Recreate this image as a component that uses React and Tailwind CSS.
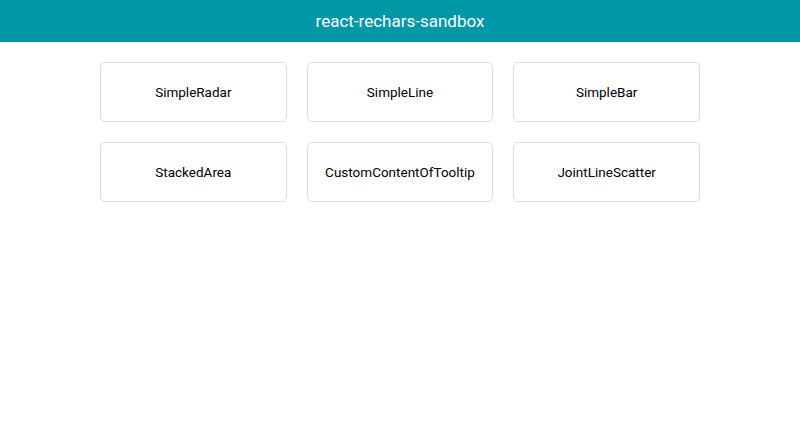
export default function App() {
  const items = [
    "SimpleRadar",
    "SimpleLine",
    "SimpleBar",
    "StackedArea",
    "CustomContentOfTooltip",
    "JointLineScatter",
  ];
  return (
    <div className="min-h-[423px] bg-white" style={{ fontFamily: 'Roboto, "Liberation Sans", sans-serif' }}>
      <header className="h-[42px] bg-[#0097a7] flex items-center justify-center">
        <h1 className="text-white text-[17px] leading-none">react-rechars-sandbox</h1>
      </header>
      <div className="w-[600px] mx-auto mt-5 grid grid-cols-3 gap-5">
        {items.map((t) => (
          <div
            key={t}
            className="h-[60px] border border-[#dcdcdc] rounded-[5px] flex items-center justify-center text-[13.5px] text-black"
          >
            {t}
          </div>
        ))}
      </div>
    </div>
  );
}
